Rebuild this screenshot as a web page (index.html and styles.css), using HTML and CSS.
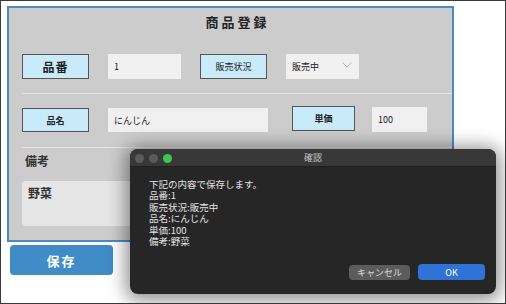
FILE: index.html
```html
<!DOCTYPE html>
<html lang="ja">

<head>
  <meta charset="UTF-8">
  <meta name="viewport" content="width=device-width, initial-scale=1.0">
  <title>商品登録</title>
  <link rel="stylesheet" href="styles.css">
</head>

<body>
  <div id="frame">
    <div id="form-panel">
      <h1 class="form-title">商品登録</h1>

      <div class="form-row row-first">
        <div class="label-box label-big">品番</div>
        <div class="field field-short">1</div>
        <div class="label-box label-small">販売状況</div>
        <div class="field field-short field-select">
          販売中
          <svg class="chevron" width="10" height="6" viewBox="0 0 10 6">
            <path d="M0.5 0.5 L5 5 L9.5 0.5" fill="none" stroke="#b8b8b8" stroke-width="1" />
          </svg>
        </div>
      </div>

      <div class="separator"></div>

      <div class="form-row row-second">
        <div class="label-box label-small name-label">品名</div>
        <div class="field field-long name-field">にんじん</div>
        <div class="label-box label-small price-label">単価</div>
        <div class="field price-field">100</div>
      </div>

      <div class="separator"></div>

      <div class="note-title">備考</div>
      <div class="note-box">野菜</div>
    </div>

    <button id="save-button">保存</button>

    <!-- confirm dialog, sits over the form -->
    <div id="dialog">
      <div class="dialog-titlebar">
        <div class="traffic-lights">
          <span class="light"></span>
          <span class="light"></span>
          <span class="light light-green"></span>
        </div>
        <div class="dialog-title">確認</div>
      </div>
      <div class="dialog-body">
        <p>下記の内容で保存します。<br>品番:1<br>販売状況:販売中<br>品名:にんじん<br>単価:100<br>備考:野菜</p>
      </div>
      <div class="dialog-buttons">
        <button class="btn-cancel">キャンセル</button>
        <button class="btn-ok">OK</button>
      </div>
    </div>
  </div>
</body>

</html>
```

FILE: styles.css
```css
* {
  box-sizing: border-box;
}

body {
  margin: 0;
  font-family: "Noto Sans CJK JP", "Noto Sans", sans-serif;
  background: #ffffff;
}

#frame {
  position: relative;
  width: 506px;
  height: 304px;
  border: 1px solid #3a3a3a;
  overflow: hidden;
}

#form-panel {
  margin: 5px 0 0 6px;
  width: 447px;
  height: 236px;
  border: 2px solid #4a8bc3;
  background: #cccccc;
  display: flex;
  flex-direction: column;
}

.form-title {
  margin: 0 0 18px 0;
  height: 28px;
  line-height: 28px;
  font-size: 13px;
  font-weight: bold;
  letter-spacing: 3px;
  text-align: center;
  padding-left: 14px;
  color: #222;
}

.form-row {
  display: flex;
  margin-left: 13px;
  gap: 19px;
}

.row-first {
  height: 25px;
}

.label-box {
  width: 67px;
  height: 25px;
  background: #c8eaf9;
  border: 1px solid #555;
  display: flex;
  align-items: center;
  justify-content: center;
  color: #222;
}

.label-big {
  font-size: 12px;
  font-weight: bold;
  letter-spacing: 1px;
}

.label-small {
  font-size: 9px;
}

.field {
  height: 25px;
  background: #f0f0f0;
  font-size: 9px;
  color: #222;
  display: flex;
  align-items: center;
  padding-left: 6px;
}

.field-short {
  width: 73px;
}

.field-select {
  position: relative;
}

.chevron {
  position: absolute;
  right: 7px;
  top: 8px;
}

.separator {
  height: 1px;
  background: #e4e4e4;
  margin: 14px 0 0 13px;
}

.row-second {
  height: 26px;
  margin-top: 13px;
}

.name-label {
  height: 24px;
  margin-top: 1px;
  font-weight: bold;
}

.name-field {
  width: 160px;
  height: 24px;
  margin-top: 1px;
}

.price-label {
  width: 63px;
  margin-left: 5px;
  margin-top: -1px;
  font-weight: bold;
}

.price-field {
  width: 55px;
  margin-left: -2px;
  height: 25px;
}

.note-title {
  margin: 6px 0 0 16px;
  height: 14px;
  line-height: 14px;
  font-size: 12px;
  font-weight: bold;
  color: #333;
}

.note-box {
  margin: 13px 0 0 13px;
  width: 246px;
  height: 45px;
  background: #e6e6e6;
  border-radius: 4px;
  padding: 3px 6px;
  font-size: 12px;
  font-weight: 600;
  color: #333;
}

#save-button {
  display: block;
  margin: 3px 0 0 9px;
  width: 103px;
  height: 30px;
  border: none;
  border-radius: 4px;
  background: #3f8cc9;
  color: #ffffff;
  font-family: inherit;
  font-size: 13px;
  font-weight: bold;
  letter-spacing: 2px;
}

#dialog {
  position: absolute;
  left: 129px;
  top: 148px;
  width: 366px;
  height: 145px;
  background: #262626;
  border-radius: 8px;
  box-shadow: 0 2px 18px 4px rgba(0, 0, 0, 0.45);
  display: flex;
  flex-direction: column;
  overflow: hidden;
}

.dialog-titlebar {
  position: relative;
  height: 18px;
  background: #383838;
  border-bottom: 1px solid #1f1f1f;
  display: flex;
  align-items: center;
  justify-content: center;
}

.traffic-lights {
  position: absolute;
  left: 5px;
  top: 5px;
  display: flex;
  gap: 5px;
}

.light {
  width: 9px;
  height: 9px;
  border-radius: 50%;
  background: #5b5b5b;
}

.light-green {
  background: #3ec84a;
}

.dialog-title {
  font-size: 9px;
  color: #c8c8c8;
}

.dialog-body {
  padding: 12px 0 0 19px;
  flex: 1;
}

.dialog-body p {
  margin: 0;
  font-size: 9.5px;
  line-height: 11.4px;
  color: #e2e2e2;
}

.dialog-buttons {
  display: flex;
  justify-content: flex-end;
  align-items: center;
  gap: 8px;
  padding: 0 11px 14px 0;
}

.btn-cancel,
.btn-ok {
  border: none;
  font-family: inherit;
  color: #ffffff;
  font-size: 9px;
}

.btn-cancel {
  width: 61px;
  height: 15px;
  border-radius: 4px;
  background: #5c5c5c;
  color: #dcdcdc;
}

.btn-ok {
  width: 67px;
  height: 16px;
  border-radius: 4px;
  background: #2f72d8;
}
```
